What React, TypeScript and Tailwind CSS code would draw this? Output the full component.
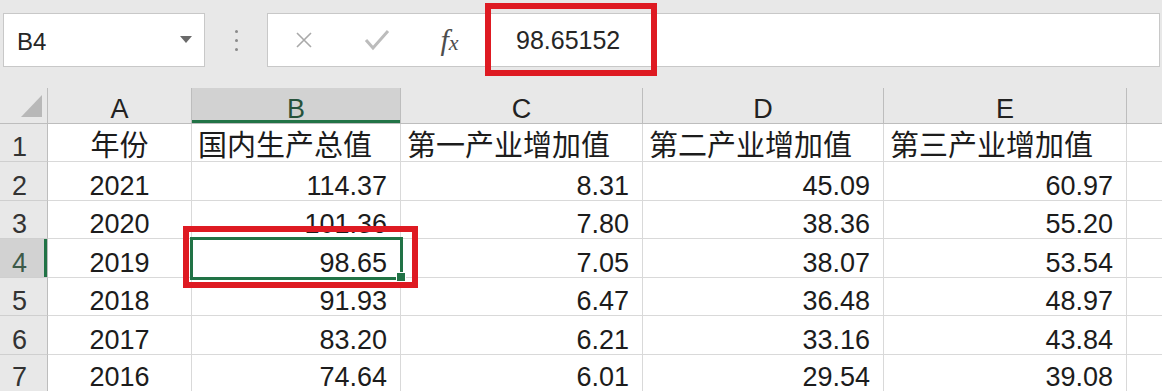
import React from "react";

const rows: string[][] = [
  ["年份", "国内生产总值", "第一产业增加值", "第二产业增加值", "第三产业增加值"],
  ["2021", "114.37", "8.31", "45.09", "60.97"],
  ["2020", "101.36", "7.80", "38.36", "55.20"],
  ["2019", "98.65", "7.05", "38.07", "53.54"],
  ["2018", "91.93", "6.47", "36.48", "48.97"],
  ["2017", "83.20", "6.21", "33.16", "43.84"],
  ["2016", "74.64", "6.01", "29.54", "39.08"],
];

const heights = ["h-[38px]", "h-[39px]", "h-[38px]", "h-[39px]", "h-[38px]", "h-[39px]", "h-[36px]"];
const cols = ["A", "B", "C", "D", "E"];
const gridCols = "grid grid-cols-[48px_144px_209px_242px_241px_243px_1fr]";

export default function App() {
  return (
    <div
      className="relative w-[1162px] h-[391px] overflow-hidden bg-white"
      style={{ fontFamily: '"Liberation Sans", "Noto Sans CJK SC", sans-serif' }}
    >
      {/* Toolbar */}
      <div className="h-[88px] bg-[#e8e8e8] pt-[13px] flex items-start">
        <div className="ml-[3px] w-[202px] h-[54px] bg-white border border-[#c8c8c8] flex items-center">
          <span className="pl-[13px] pt-[3px] text-[24px] leading-none text-[#262626]">B4</span>
          <div className="ml-auto mr-[12px] mt-[-2px] w-0 h-0 border-l-[6px] border-r-[6px] border-t-[7px] border-l-transparent border-r-transparent border-t-[#6a6a6a]" />
        </div>
        <div className="w-[62px] h-[54px] flex flex-col items-center pt-[17px] gap-[6px]">
          <div className="w-[3px] h-[3px] rounded-full bg-[#8a8a8a]" />
          <div className="w-[3px] h-[3px] rounded-full bg-[#8a8a8a]" />
          <div className="w-[3px] h-[3px] rounded-full bg-[#8a8a8a]" />
        </div>
        <div className="w-[893px] h-[54px] bg-white border border-[#c8c8c8] flex items-center">
          <div className="w-[72px] flex justify-center">
            <svg width="20" height="20" viewBox="0 0 20 20">
              <path d="M3 3 L17 17 M17 3 L3 17" stroke="#a9a9a9" strokeWidth="1.6" fill="none" />
            </svg>
          </div>
          <div className="w-[74px] flex justify-center">
            <svg width="26" height="22" viewBox="0 0 26 22">
              <path d="M2 11 L9 19 L24 2" stroke="#bcbcbc" strokeWidth="3" fill="none" />
            </svg>
          </div>
          <div className="w-[71px] flex justify-center">
            <span
              className="italic text-[#4d4d4d] text-[30px] leading-none"
              style={{ fontFamily: '"Liberation Serif", serif' }}
            >
              f<span className="text-[22px]">x</span>
            </span>
          </div>
          <div className="w-px h-[52px] bg-[#d6d6d6] ml-[5px]" />
          <span className="pl-[25px] text-[25px] leading-none text-[#262626]">98.65152</span>
        </div>
      </div>

      {/* Column header row */}
      <div className={`${gridCols} h-[36px] bg-[#e8e8e8]`}>
        <div className="border-r border-b border-[#bdbdbd] relative">
          <svg className="absolute left-[21px] top-[7px]" width="22" height="23" viewBox="0 0 22 23">
            <polygon points="21,0 21,22 0,22" fill="#b8b8b8" />
          </svg>
        </div>
        {cols.map((c) => (
          <div
            key={c}
            className={
              c === "B"
                ? "flex items-end justify-center border-r border-b border-[#bdbdbd] bg-[#d2d2d2] shadow-[inset_0_-3px_0_#217346] text-[#27523b] text-[27px] leading-none"
                : "flex items-end justify-center border-r border-b border-[#bdbdbd] text-[#222] text-[27px] leading-none"
            }
          >
            {c}
          </div>
        ))}
        <div className="border-b border-[#bdbdbd]" />
      </div>

      {/* Body */}
      {rows.map((r, i) => {
        const last = i === rows.length - 1;
        const bb = last ? "" : "border-b";
        return (
          <div key={i} className={`${gridCols} ${heights[i]}`}>
            <div
              className={
                i === 3
                  ? `flex items-end justify-center pr-[8px] bg-[#d2d2d2] ${bb} border-[#cfcfcf] border-r border-r-[#bdbdbd] shadow-[inset_-3px_0_0_#217346] text-[#3d5a49] text-[27px] leading-none`
                  : `flex items-end justify-center pr-[8px] bg-[#e8e8e8] ${bb} border-[#cfcfcf] border-r border-r-[#bdbdbd] text-[#333] text-[27px] leading-none`
              }
            >
              {i + 1}
            </div>
            {r.map((v, j) => {
              const isHeader = i === 0;
              const align =
                j === 0 ? "justify-center" : isHeader ? "justify-start pl-[6px]" : "justify-end pr-[13px]";
              return (
                <div
                  key={j}
                  className={`flex items-end ${align} border-r ${bb} border-[#d9d9d9] text-[#1c1c1c] leading-none whitespace-nowrap overflow-hidden ${
                    isHeader ? "text-[29px]" : "text-[27px]"
                  }`}
                >
                  {v}
                </div>
              );
            })}
            <div className={`${bb} border-[#d9d9d9]`} />
          </div>
        );
      })}

      {/* Selected cell outline */}
      <div className="absolute left-[190px] top-[237px] w-[213px] h-[43px] border-[3px] border-[#217346]" />
      <div className="absolute left-[396px] top-[272px] w-[10px] h-[10px] bg-[#217346] border border-white" />

      {/* Red annotation boxes */}
      <div className="absolute left-[183px] top-[226px] w-[235px] h-[62px] border-[6px] border-[#de1a22]" />
      <div className="absolute left-[485px] top-[3px] w-[172px] h-[73px] border-[6px] border-[#de1a22]" />
    </div>
  );
}
